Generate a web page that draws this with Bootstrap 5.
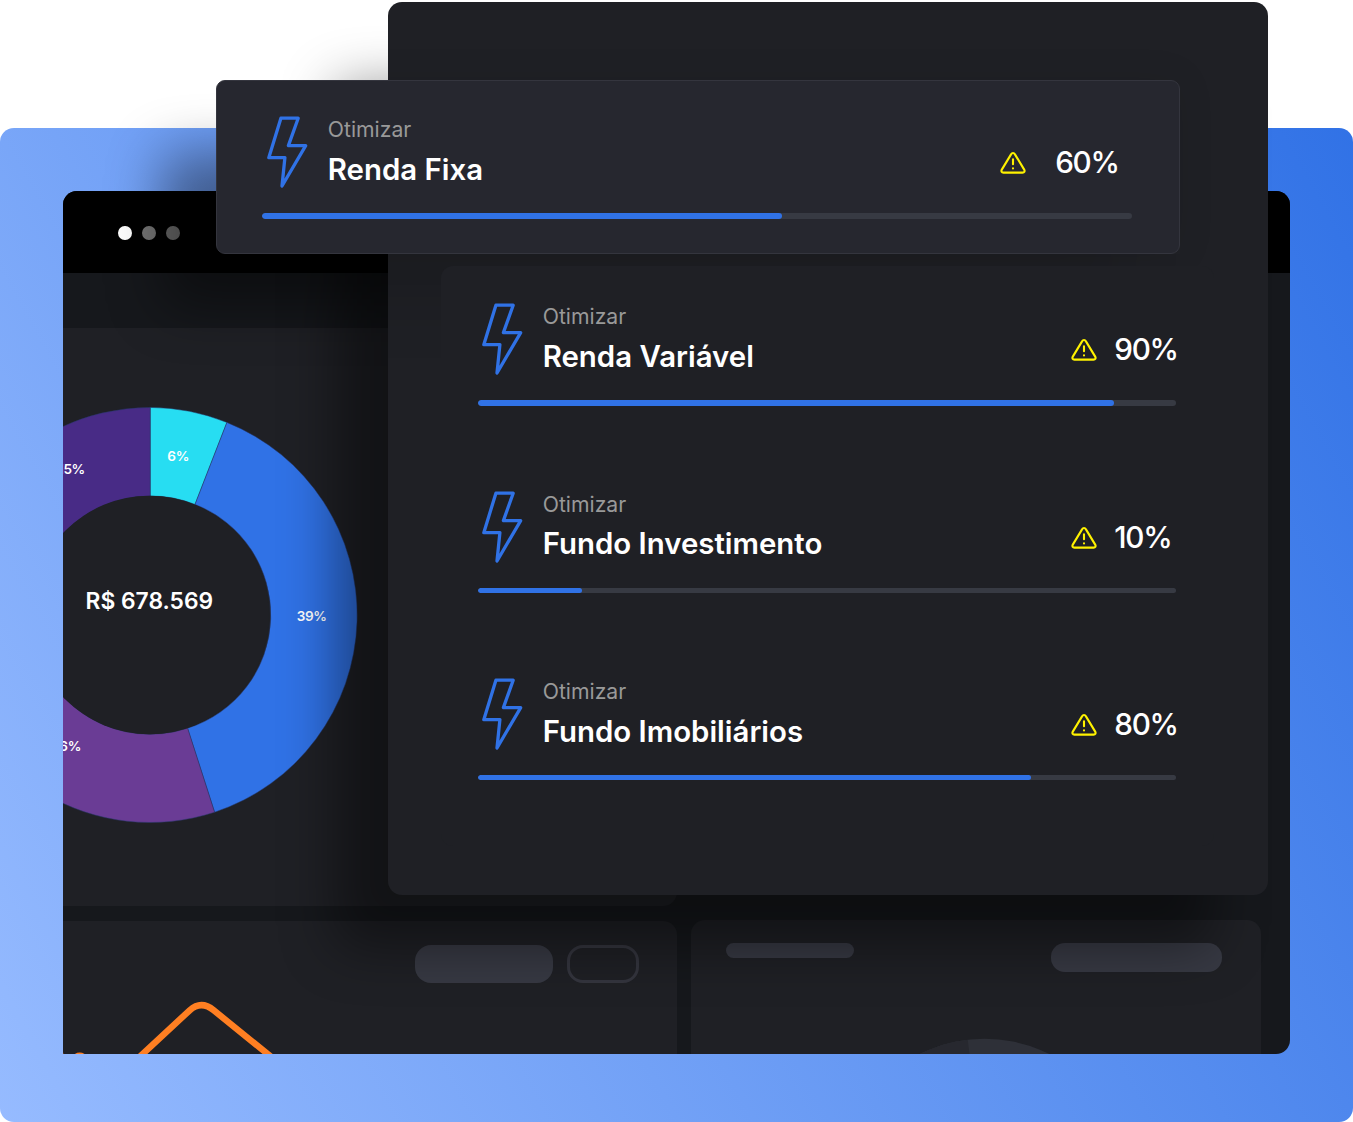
<!DOCTYPE html>
<html lang="pt-BR">
<head>
<meta charset="utf-8">
<meta name="viewport" content="width=device-width, initial-scale=1">
<title>Otimizar carteira</title>
<link href="https://cdn.jsdelivr.net/npm/bootstrap@5.3.0/dist/css/bootstrap.min.css" rel="stylesheet">
<style>
  body { font-family: Inter, "Liberation Sans", sans-serif; background: #fff; }
  .stage { width: 1353px; height: 1122px; }
  .backdrop { left: 0; top: 128px; width: 1353px; height: 994px; border-radius: 14px; background: linear-gradient(61deg, #96bbff 0%, #3172e6 100%); }
  .app-window { left: 62.5px; top: 190.5px; width: 1227.7px; height: 863.5px; border-radius: 14px 14px 14px 0; background: #16181c; }
  .title-strip { height: 82.5px; padding: 2px 0 0 55px; gap: 10px; background: #000; }
  .dot { width: 14px; height: 14.5px; border-radius: 50%; background: #fff; }
  .dot-2 { background: #777; }
  .dot-3 { background: #6e6e6e; }
  .chart-tile { margin-top: 55px; width: 614.5px; height: 577.5px; background: #1f2025; border-radius: 0 0 14px 0; }
  .chart-tile svg { display: block; }
  .slice-label { font-size: 13.6px; letter-spacing: -.35px; }
  .bottom-tiles { margin-top: 14.5px; gap: 14px; height: 140px; }
  .tile-a { width: 614.5px; margin-top: 1px; background: #1f2025; border-radius: 0 14px 0 0; padding: 24px 38px 0 0; gap: 14px; }
  .tile-b { width: 570px; background: #1f2025; border-radius: 14px 14px 0 0; padding: 23px 39px 0 35.4px; }
  .pill { background: #373943; }
  .pill-lg { width: 138px; height: 37.5px; border-radius: 16px; }
  .pill-line { width: 72px; height: 37.5px; border-radius: 16px; border: 3px solid #34353e; }
  .pill-sm { width: 127.5px; height: 15px; border-radius: 8px; }
  .pill-md { width: 171px; height: 29px; border-radius: 14px; }
  .spark { left: 0; bottom: 0; }
  .ring { left: 220px; bottom: 0; }
  .cast { border-radius: 12px; box-shadow: -54px 54px 54px rgba(0,0,0,.42); }
  .cast-card { left: 216px; top: 99px; width: 964px; height: 153px; }
  .cast-panel { left: 389px; top: 31px; width: 877px; height: 862px; }
  .side-panel { left: 387.5px; top: 1.5px; width: 880.5px; height: 893.5px; border-radius: 14px; background: #1f2025; padding: 264.5px 54px 0 53.5px; }
  .panel-shade { left: -171.5px; top: 78.5px; width: 964px; height: 174px; box-shadow: -54px 54px 54px rgba(0,0,0,.1), 0 0 36px rgba(0,0,0,.08); }
  .goal-list { background: #1f2025; border-radius: 12px; padding: 37.2px 38.3px 0 36.9px; height: 580px; gap: 84.9px; }
  .float-card { left: 216px; top: 79.5px; width: 964px; height: 174.5px; border-radius: 9px; background: #26272f; border: 1px solid #34353e; padding: 35.5px 46.8px 0 45px; }
  .goal { height: 102.5px; }
  .goal-top { height: 97px; padding-left: 3.8px; }
  .goal-text { margin-left: 20px; }
  .goal-kicker { font-size: 21.2px; line-height: 26px; font-weight: 400; color: #999; }
  .goal-name { font-size: 29.4px; line-height: 36px; font-weight: 600; color: #fff; margin-top: 9.6px; white-space: nowrap; }
  .goal-score { margin-top: 28px; gap: 18px; }
  .goal-score span { width: 61.4px; font-size: 29.7px; line-height: 36px; font-weight: 550; letter-spacing: -1.3px; color: #fff; white-space: nowrap; }
  .goal-score svg { position: relative; left: .4px; top: 1px; }
  .float-card .goal-top { padding-left: 5px; }
  .float-card .goal-text { margin-left: 19.8px; }
  .float-card .goal-score { gap: 28.5px; padding-right: 15.6px; }
  .float-card .goal-score svg { left: -.4px; }
  .goal-bar { height: 5.5px; border-radius: 3px; background: #373a43; }
  .goal-bar .progress-bar { background: #3072e6; border-radius: 3px; }
</style>
</head>
<body>
<svg width="0" height="0" class="position-absolute" aria-hidden="true">
  <symbol id="bolt" viewBox="0 0 41 72"><path d="M13.9 2.2H31.2L21.4 29.6H38.7L15 70L17.9 41.7H1.8Z" fill="none" stroke="#3072e6" stroke-width="3.3" stroke-linejoin="round"/></symbol>
  <symbol id="warn" viewBox="0 0 26 24"><path d="M11.2 3.1 1.8 18.6C.9 20.1 1.7 21.6 3.4 21.6H22.6C24.3 21.6 25.1 20.1 24.2 18.6L14.8 3.1C14 1.7 12 1.7 11.2 3.1ZM13 8.3V13.2M13 17.3V17.5" fill="none" stroke="#fff200" stroke-width="2.1" stroke-linecap="round" stroke-linejoin="round"/></symbol>
</svg>

<main class="stage position-relative overflow-hidden">
  <div class="backdrop position-absolute"></div>

  <section class="app-window position-absolute overflow-hidden">
    <div class="title-strip d-flex align-items-center">
      <div class="dot"></div><div class="dot dot-2"></div><div class="dot dot-3"></div>
    </div>
    <div class="chart-tile overflow-hidden">
      <svg width="614" height="577" viewBox="63 328 614 577" font-family="Inter, sans-serif" fill="#fff" font-weight="600">
        <g stroke="#27386b" stroke-width=".5">
          <path fill="#27ddf2" d="M150.2 407.4A207.6 207.6 0 0 1 226.9 422.4L195 504.4A119 119 0 0 0 150.2 496Z"/>
          <path fill="#3072e6" d="M226.9 422.4A207.6 207.6 0 0 1 214.6 812.2L187.6 728.2A118.6 118.6 0 0 0 195 504.4Z"/>
          <path fill="#6a3c95" d="M214.6 812.2A207.6 207.6 0 0 1 -54.4 651L32.8 635.7A119 119 0 0 0 187.6 728.2Z"/>
          <path fill="#482b86" d="M-17.9 493A207.6 207.6 0 0 1 150.2 407.4V496A119 119 0 0 0 53.7 545Z"/>
        </g>
        <circle cx="149.5" cy="615" r="119.2" fill="#1f2025"/>
        <g class="slice-label">
          <text x="178.2" y="460.5" text-anchor="middle">6%</text>
          <text x="311.7" y="621" text-anchor="middle">39%</text>
          <text x="84.9" y="474.3" text-anchor="end">15%</text>
          <text x="81" y="750.8" text-anchor="end">16%</text>
        </g>
        <text x="149.3" y="608.9" font-size="22.8" text-anchor="middle">R$ 678.569</text>
      </svg>
    </div>
    <div class="bottom-tiles d-flex">
      <div class="tile-a d-flex justify-content-end position-relative">
        <svg class="spark position-absolute" width="250" height="60" viewBox="63.3 1000 250 60" fill="none" stroke="#ff7f22" stroke-width="6.4"><path d="M136 1060.5 190 1010.3Q201.5 1000 214 1010.3L276 1060.5M60 1056H63.6M71 1063Q80 1048.6 89 1063"/></svg>
        <div class="pill pill-lg"></div><div class="pill-line"></div>
      </div>
      <div class="tile-b d-flex justify-content-between position-relative">
        <svg class="ring position-absolute" width="150" height="22" viewBox="911.5 1038.2 150 22"><circle cx="985" cy="1185" r="146" fill="#2e3038"/><path d="M968 1038 971 1062H905V1038Z" fill="#27282f" clip-path="url(#ringClip)"/><clipPath id="ringClip"><circle cx="985" cy="1185" r="146"/></clipPath></svg>
        <div class="pill pill-sm"></div><div class="pill pill-md"></div>
      </div>
    </div>
  </section>

  <div class="cast cast-card position-absolute"></div>
  <div class="cast cast-panel position-absolute"></div>

  <section class="side-panel position-absolute overflow-hidden">
    <div class="panel-shade position-absolute"></div>
    <div class="goal-list d-flex flex-column position-relative">
      <div class="goal">
        <div class="goal-top d-flex align-items-start">
          <svg width="41" height="72"><use href="#bolt"/></svg>
          <div class="goal-text"><div class="goal-kicker">Otimizar</div><div class="goal-name">Renda Variável</div></div>
          <div class="goal-score d-flex align-items-center ms-auto"><svg width="26" height="24"><use href="#warn"/></svg><span>90%</span></div>
        </div>
        <div class="goal-bar progress"><div class="progress-bar" style="width:91.1%"></div></div>
      </div>
      <div class="goal">
        <div class="goal-top d-flex align-items-start">
          <svg width="41" height="72"><use href="#bolt"/></svg>
          <div class="goal-text"><div class="goal-kicker">Otimizar</div><div class="goal-name">Fundo Investimento</div></div>
          <div class="goal-score d-flex align-items-center ms-auto"><svg width="26" height="24"><use href="#warn"/></svg><span>10%</span></div>
        </div>
        <div class="goal-bar progress"><div class="progress-bar" style="width:14.9%"></div></div>
      </div>
      <div class="goal">
        <div class="goal-top d-flex align-items-start">
          <svg width="41" height="72"><use href="#bolt"/></svg>
          <div class="goal-text"><div class="goal-kicker">Otimizar</div><div class="goal-name">Fundo Imobiliários</div></div>
          <div class="goal-score d-flex align-items-center ms-auto"><svg width="26" height="24"><use href="#warn"/></svg><span>80%</span></div>
        </div>
        <div class="goal-bar progress"><div class="progress-bar" style="width:79.2%"></div></div>
      </div>
    </div>
  </section>

  <section class="float-card position-absolute">
    <div class="goal">
      <div class="goal-top d-flex align-items-start">
        <svg width="41" height="72"><use href="#bolt"/></svg>
        <div class="goal-text"><div class="goal-kicker">Otimizar</div><div class="goal-name">Renda Fixa</div></div>
        <div class="goal-score d-flex align-items-center ms-auto"><svg width="26" height="24"><use href="#warn"/></svg><span>60%</span></div>
      </div>
      <div class="goal-bar progress"><div class="progress-bar" style="width:59.8%"></div></div>
    </div>
  </section>
</main>
<script src="https://cdn.jsdelivr.net/npm/bootstrap@5.3.0/dist/js/bootstrap.bundle.min.js"></script>
</body>
</html>
